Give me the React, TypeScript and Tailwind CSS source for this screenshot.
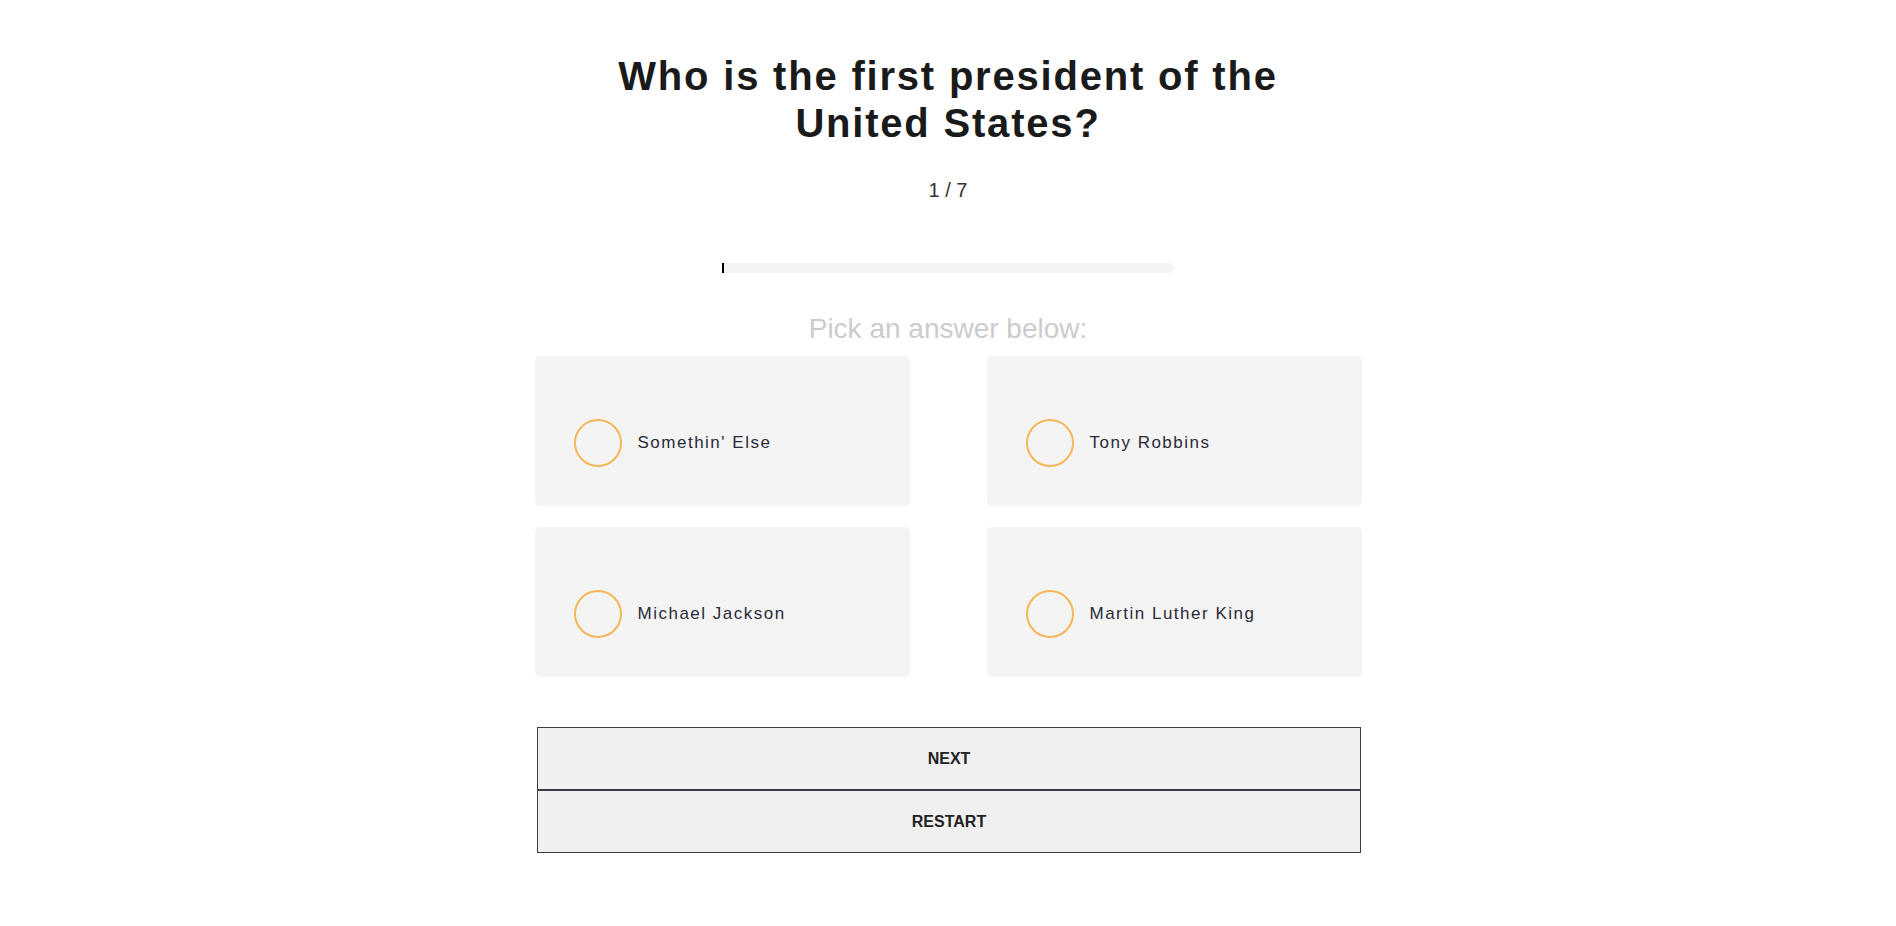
import React from "react";

const options = ["Somethin' Else", "Tony Robbins", "Michael Jackson", "Martin Luther King"];

export default function App() {
  return (
    <div className="min-h-screen bg-white flex flex-col items-center font-['Liberation_Sans',Arial,sans-serif]">
      <h1 className="mt-[53px] max-w-[700px] text-center text-[40px] leading-[47px] font-bold tracking-[1.8px] text-[#1a1a1a]">
        Who is the first president of the United States?
      </h1>
      <div className="mt-[31px] text-[20px] leading-[24px] text-[#333333]">1 / 7</div>
      <div className="mt-[61px] w-[452px] h-[10px] bg-[#f4f4f4] rounded-r-[5px] flex">
        <div className="w-[2px] h-full bg-black" />
      </div>
      <div className="mt-[40px] text-[28px] leading-[32px] text-[#cccccc]">Pick an answer below:</div>
      <div className="mt-[11px] grid grid-cols-[375px_375px] gap-x-[77px] gap-y-[21px]">
        {options.map((o) => (
          <div key={o} className="h-[150px] rounded-[5px] bg-[#f4f4f4] flex items-center pl-[39px] pt-[24px]">
            <div className="w-[48px] h-[48px] rounded-full border-2 border-[#f5b755] shrink-0" />
            <span className="ml-[16px] text-[17px] tracking-[1.5px] text-[#2a2a38]">{o}</span>
          </div>
        ))}
      </div>
      <div className="mt-[50px] ml-[2px] w-[824px] flex flex-col">
        <button className="h-[63px] border border-[#3d3b4a] bg-[#f0f0f0] text-[16px] font-bold text-[#222222]">NEXT</button>
        <button className="h-[63px] border border-[#3d3b4a] bg-[#f0f0f0] text-[16px] font-bold text-[#222222]">RESTART</button>
      </div>
    </div>
  );
}
